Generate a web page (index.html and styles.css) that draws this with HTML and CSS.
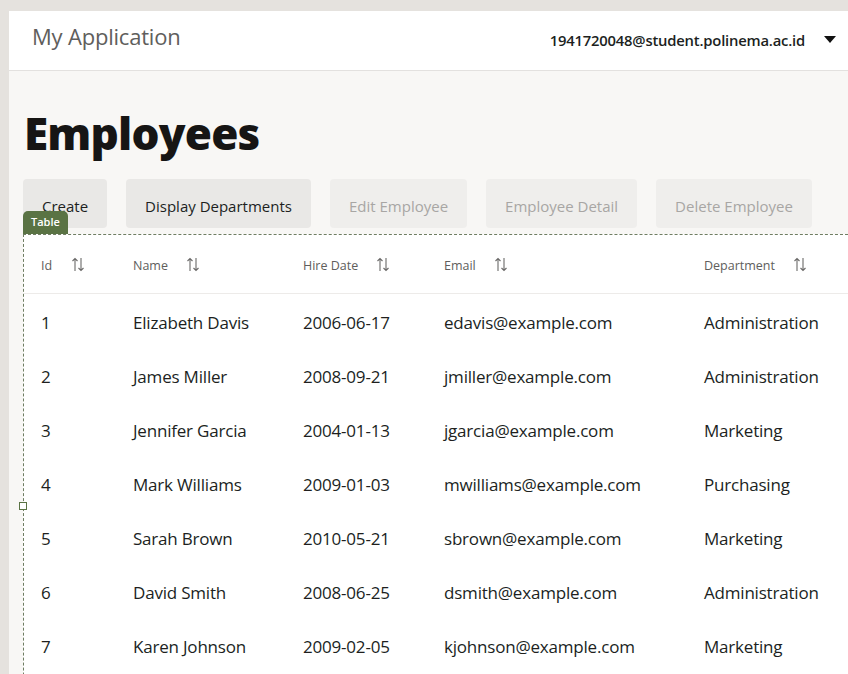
FILE: index.html
```html
<!DOCTYPE html>
<html lang="en">
<head>
<meta charset="utf-8">
<title>Employees</title>
<link rel="stylesheet" href="styles.css">
</head>
<body>
<div class="app">
  <header class="topbar">
    <span class="brand">My Application</span>
    <div class="user">
      <span class="email">1941720048@student.polinema.ac.id</span>
      <svg class="caret" width="12" height="7" viewBox="0 0 12 7"><path d="M0 0H12L6 7Z" fill="#111"/></svg>
    </div>
  </header>
  <main class="content">
    <h1 class="title">Employees</h1>
    <div class="toolbar">
      <button class="btn">Create</button>
      <button class="btn">Display Departments</button>
      <button class="btn disabled">Edit Employee</button>
      <button class="btn disabled">Employee Detail</button>
      <button class="btn disabled">Delete Employee</button>
    </div>
    <section class="table-wrap">
      <span class="tag">Table</span>
      <span class="handle"></span>
      <table class="grid">
        <colgroup>
          <col class="c-id"><col class="c-name"><col class="c-date"><col class="c-email"><col class="c-dept">
        </colgroup>
        <thead>
          <tr>
            <th><span class="th-label">Id</span><svg class="sort s-id" width="12" height="15" viewBox="0 0 12 15"><path d="M3 14V1.5M0.5 4L3 1.5L5.5 4M9 1V13.5M6.5 11L9 13.5L11.5 11" fill="none" stroke="#6b6a69" stroke-width="1.1"/></svg></th>
            <th><span class="th-label">Name</span><svg class="sort" width="12" height="15" viewBox="0 0 12 15"><path d="M3 14V1.5M0.5 4L3 1.5L5.5 4M9 1V13.5M6.5 11L9 13.5L11.5 11" fill="none" stroke="#6b6a69" stroke-width="1.1"/></svg></th>
            <th><span class="th-label">Hire Date</span><svg class="sort" width="12" height="15" viewBox="0 0 12 15"><path d="M3 14V1.5M0.5 4L3 1.5L5.5 4M9 1V13.5M6.5 11L9 13.5L11.5 11" fill="none" stroke="#6b6a69" stroke-width="1.1"/></svg></th>
            <th><span class="th-label">Email</span><svg class="sort" width="12" height="15" viewBox="0 0 12 15"><path d="M3 14V1.5M0.5 4L3 1.5L5.5 4M9 1V13.5M6.5 11L9 13.5L11.5 11" fill="none" stroke="#6b6a69" stroke-width="1.1"/></svg></th>
            <th><span class="th-label">Department</span><svg class="sort" width="12" height="15" viewBox="0 0 12 15"><path d="M3 14V1.5M0.5 4L3 1.5L5.5 4M9 1V13.5M6.5 11L9 13.5L11.5 11" fill="none" stroke="#6b6a69" stroke-width="1.1"/></svg></th>
          </tr>
        </thead>
        <tbody>
          <tr><td>1</td><td>Elizabeth Davis</td><td>2006-06-17</td><td>edavis@example.com</td><td>Administration</td></tr>
          <tr><td>2</td><td>James Miller</td><td>2008-09-21</td><td>jmiller@example.com</td><td>Administration</td></tr>
          <tr><td>3</td><td>Jennifer Garcia</td><td>2004-01-13</td><td>jgarcia@example.com</td><td>Marketing</td></tr>
          <tr><td>4</td><td>Mark Williams</td><td>2009-01-03</td><td>mwilliams@example.com</td><td>Purchasing</td></tr>
          <tr><td>5</td><td>Sarah Brown</td><td>2010-05-21</td><td>sbrown@example.com</td><td>Marketing</td></tr>
          <tr><td>6</td><td>David Smith</td><td>2008-06-25</td><td>dsmith@example.com</td><td>Administration</td></tr>
          <tr><td>7</td><td>Karen Johnson</td><td>2009-02-05</td><td>kjohnson@example.com</td><td>Marketing</td></tr>
        </tbody>
      </table>
    </section>
  </main>
</div>
</body>
</html>
```
FILE: styles.css
```css
html, body {
  margin: 0;
  padding: 0;
  height: 100%;
  overflow: hidden;
}
body {
  background: #e5e2de;
  font-family: "Open Sans", "Noto Sans", sans-serif;
  color: #201f1e;
}
.app {
  margin: 11px 0 0 9px;
  background: #f8f7f5;
  height: calc(100% - 11px);
  overflow: hidden;
}
.topbar {
  height: 59px;
  background: #ffffff;
  border-bottom: 1px solid #e3e1df;
  display: flex;
  align-items: center;
  justify-content: space-between;
  padding: 0 12px 0 23px;
}
.brand {
  font-size: 22px;
  color: #605e5c;
  letter-spacing: -0.2px;
  margin-bottom: 9px;
}
.user {
  display: flex;
  align-items: center;
  gap: 19px;
  margin-bottom: 2px;
}
.email {
  font-size: 14.8px;
  font-weight: 600;
  color: #201f1e;
  letter-spacing: -0.2px;
}
.caret { display: block; }
.content {
  padding: 0 0 0 14px;
}
.title {
  margin: 36px 0 20px 1px;
  font-size: 44px;
  line-height: 52px;
  font-weight: 800;
  color: #161514;
  letter-spacing: -0.8px;
}
.toolbar {
  display: flex;
  gap: 19px;
}
.btn {
  height: 49px;
  padding: 4px 19px 0;
  border: none;
  border-radius: 4px;
  background: #e9e8e6;
  font-family: inherit;
  font-size: 15px;
  font-weight: 500;
  color: #201f1e;
  letter-spacing: 0;
}
.btn.disabled {
  background: #efeeec;
  color: #a8a6a4;
}
.table-wrap {
  position: relative;
  margin-top: 6px;
  background: #ffffff;
  border-top: 1px dashed #6f7d62;
  border-left: 1px dashed #6f7d62;
  height: 600px;
}
.tag {
  position: absolute;
  top: -24px;
  left: -1px;
  height: 23px;
  padding: 0 8px;
  background: #5a7344;
  color: #ffffff;
  font-size: 11px;
  font-weight: 600;
  line-height: 22px;
  border-radius: 5px 5px 0 0;
}
.handle {
  position: absolute;
  left: -5px;
  top: 267px;
  width: 6px;
  height: 6px;
  background: #ffffff;
  border: 1px solid #5a7344;
}
.grid {
  border-collapse: collapse;
  table-layout: fixed;
  width: 920px;
}
.c-id { width: 109px; }
.c-name { width: 170px; }
.c-date { width: 141px; }
.c-email { width: 260px; }
.c-dept { width: 240px; }
.grid th {
  height: 57px;
  padding: 1px 0 0;
  text-align: left;
  font-weight: 400;
  font-size: 12.5px;
  color: #605e5c;
  border-bottom: 1px solid #edebe9;
  vertical-align: middle;
}
.grid th:first-child, .grid td:first-child { padding-left: 17px; }
.th-label {
  display: inline-block;
  vertical-align: middle;
}
.sort {
  display: inline-block;
  vertical-align: middle;
  margin-left: 19px;
  position: relative;
  top: -1px;
}
.sort.s-id { margin-left: 20px; }
.grid td {
  height: 51px;
  padding: 3px 0 0;
  font-size: 17px;
  color: #201f1e;
  letter-spacing: -0.2px;
  vertical-align: middle;
}
```
